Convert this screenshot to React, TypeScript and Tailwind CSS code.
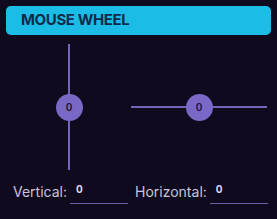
import React from 'react';

const Knob: React.FC<{ value: number }> = ({ value }) => (
  <div className="w-[27px] h-[27px] rounded-full bg-[#7b67c6] flex items-center justify-center text-[10px] font-semibold text-[#1b1240]">
    {value}
  </div>
);

const Field: React.FC<{ label: string; value: number }> = ({ label, value }) => (
  <div className="flex items-end">
    <span className="text-[14px] text-[#c8c4da] leading-none pb-[5px]">{label}</span>
    <div className="ml-[3px] w-[58px] h-[22px] border-b border-[#6a5fa6] text-[10px] font-bold text-[#dcd8ee] pl-[6px] pb-[9px] leading-none flex items-end">
      {value}
    </div>
  </div>
);

export default function App() {
  return (
    <div className="w-[277px] h-[219px] bg-[#0f0a1e] p-[6px] font-['Inter',sans-serif] overflow-hidden">
      <div className="h-[29px] rounded-[5px] bg-[#1bbde6] flex items-center pl-[15px]">
        <span className="text-[15px] font-bold text-[#0f2b4b] tracking-tight">MOUSE WHEEL</span>
      </div>

      <div className="flex mt-[9px] h-[126px]">
        {/* vertical */}
        <div className="w-[126px] flex justify-center">
          <div className="relative w-[2px] h-full bg-[#7465b8] flex items-center justify-center">
            <div className="absolute">
              <Knob value={0} />
            </div>
          </div>
        </div>
        {/* horizontal */}
        <div className="w-[136px] -ml-[1px] flex items-center">
          <div className="relative w-full h-[2px] bg-[#7465b8] flex items-center justify-center">
            <div className="absolute">
              <Knob value={0} />
            </div>
          </div>
        </div>
      </div>

      <div className="flex mt-[12px] pl-[7px] gap-[7px]">
        <Field label="Vertical:" value={0} />
        <Field label="Horizontal:" value={0} />
      </div>
    </div>
  );
}
